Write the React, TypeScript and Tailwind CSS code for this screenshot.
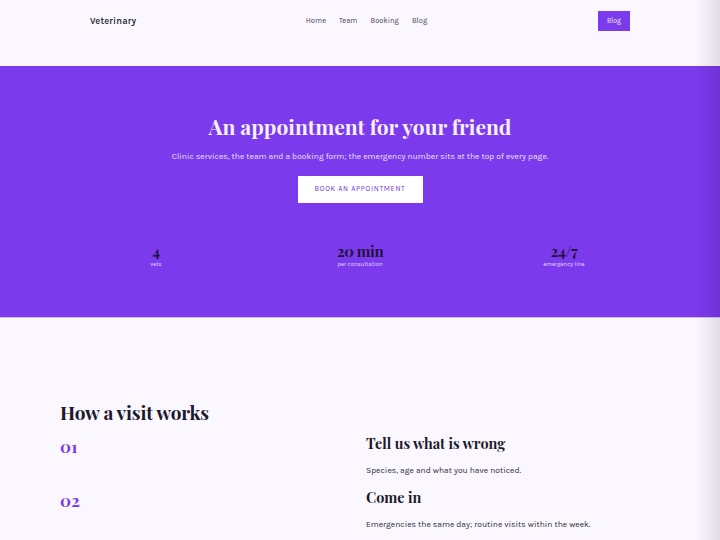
import React from "react";

const serif = "font-['Playfair_Display','DejaVu_Serif',serif]";
const sans = "font-['Karla','Lato','Liberation_Sans',sans-serif]";

const stats = [
  { value: "4", label: "vets" },
  { value: "20 min", label: "per consultation" },
  { value: "24/7", label: "emergency line" },
];

const steps = [
  { n: "01", title: "Tell us what is wrong", text: "Species, age and what you have noticed." },
  { n: "02", title: "Come in", text: "Emergencies the same day; routine visits within the week." },
];

const App: React.FC = () => {
  return (
    <div className={`${sans} relative min-h-[540px] bg-[#faf7fe] text-[#1c1a2b]`}>
      <header className="mb-[24px] flex h-[42px] items-center justify-between px-[90px]">
        <span className="w-[120px] text-[9.3px] font-semibold tracking-[0.2px]">Veterinary</span>
        <nav className="flex gap-[13px] pl-[13px] text-[7.6px] text-[#4a4658]">
          <a>Home</a>
          <a>Team</a>
          <a>Booking</a>
          <a>Blog</a>
        </nav>
        <div className="flex w-[120px] justify-end">
          <a className="flex h-[20px] w-[32px] items-center justify-center bg-[#7c3aed] text-[7px] text-[#f1e9ff]">
            Blog
          </a>
        </div>
      </header>

      <section className="h-[252px] border-b border-[#d9b8fb] bg-[#7c3aed] pt-[45px]">
        <h1 className={`${serif} text-center text-[21px] font-bold text-[#f6f0ff]`}>
          An appointment for your friend
        </h1>
        <p className="mt-[7px] text-center text-[8.5px] text-[#ece2ff]">
          Clinic services, the team and a booking form; the emergency number sits at the top of every page.
        </p>
        <div className="mt-[14px] flex justify-center">
          <a className="flex h-[27px] w-[125px] items-center justify-center bg-white text-[7.3px] tracking-[0.7px] text-[#6d3bd8]">
            BOOK AN APPOINTMENT
          </a>
        </div>
        <div className="mx-auto mt-[40px] grid w-[612px] grid-cols-3">
          {stats.map((s) => (
            <div key={s.label} className="flex flex-col items-center">
              <span className={`${serif} text-[15px] font-bold leading-[17px] tracking-[-0.3px] text-[#1e1238]`}>
                {s.value}
              </span>
              <span className="text-[6px] text-[#e6dbff]">{s.label}</span>
            </div>
          ))}
        </div>
      </section>

      <section className="px-[60px] pt-[80px]">
        <h2 className={`${serif} text-[19px] font-bold tracking-[-0.2px] text-[#1c1a2b]`}>How a visit works</h2>
        <div className="mt-[7px] flex flex-col">
          {steps.map((s) => (
            <div key={s.n} className="flex h-[54px]">
              <div className={`${serif} w-[306px] pt-[1px] text-[17px] font-bold leading-[22px] text-[#7c3aed]`}>{s.n}</div>
              <div className="flex flex-col">
                <h3 className={`${serif} text-[14.4px] font-bold leading-[18px]`}>{s.title}</h3>
                <p className="mt-[12px] text-[8.5px] text-[#2c2a3a]">{s.text}</p>
              </div>
            </div>
          ))}
        </div>
      </section>

      <div className="pointer-events-none fixed right-0 top-0 h-full w-[24px] bg-gradient-to-r from-transparent to-black/10" />
    </div>
  );
};

export default App;
